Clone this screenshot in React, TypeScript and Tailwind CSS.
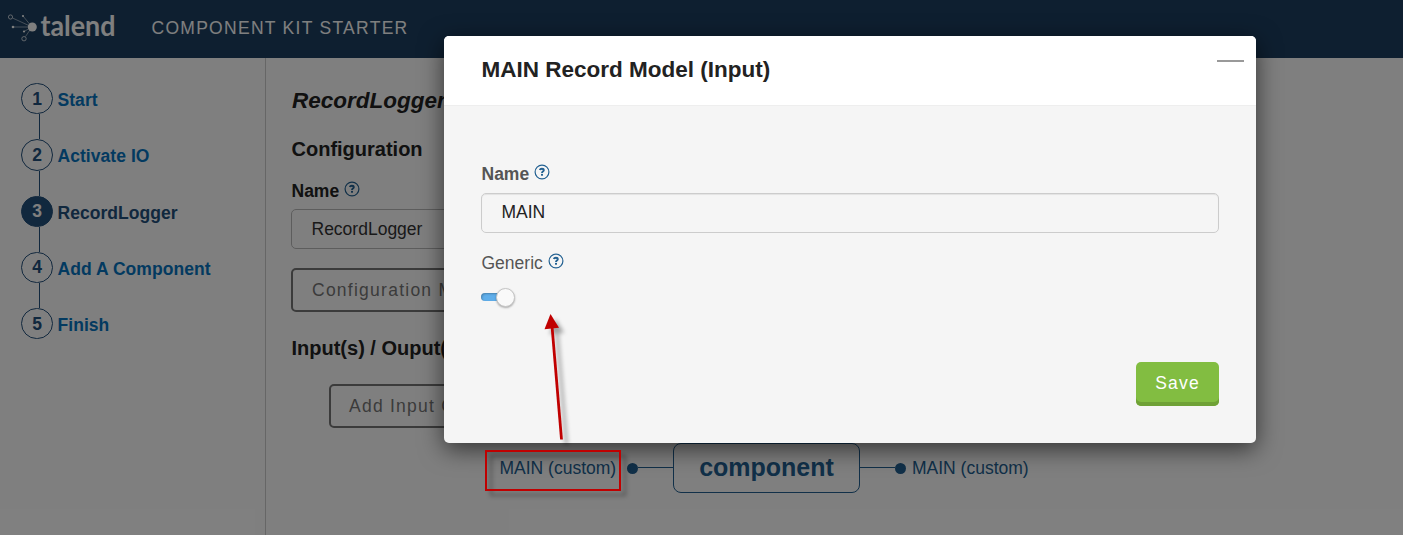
import React from "react";

const steps = ["Start", "Activate IO", "RecordLogger", "Add A Component", "Finish"];
const ACTIVE = 2;

function Help() {
  return (
    <svg className="h-4 w-4 shrink-0" viewBox="0 0 16 16" fill="none">
      <circle cx="8" cy="8" r="6.900" stroke="#236192" strokeWidth="1.200" />
      <path
        d="M5.800 6C6.100 5 6.900 4.700 7.900 4.700c1.200 0 1.900.6 1.900 1.500 0 1.300-1.800 1.300-1.800 2.700"
        stroke="#236192"
        strokeWidth="1.900"
      />
      <rect x="7" y="9.900" width="2" height="1.800" fill="#236192" />
    </svg>
  );
}

function Logo() {
  return (
    <svg className="h-[58px] w-[120px] shrink-0 overflow-visible" viewBox="0 0 120 58">
      <g stroke="#fff" strokeWidth="0.500" fill="none">
        <path d="M12.500 18 32 27M23 16l9 11M13 27h19M24 31.500l8-4.500M25.500 36.500 32 27" />
        <circle cx="10.500" cy="17" r="2.100" strokeWidth="0.700" />
        <circle cx="24" cy="38.700" r="2.200" strokeWidth="0.700" />
      </g>
      <g fill="#fff">
        <circle cx="32.300" cy="27" r="4.500" />
        <circle cx="23" cy="16" r="1.100" />
        <circle cx="13" cy="27" r="1.300" />
        <circle cx="24" cy="31.500" r="1.100" />
        <text
          x="40.500"
          y="36.300"
          fontFamily="Lato, sans-serif"
          fontWeight="700"
          fontSize="28"
          textLength="75"
          lengthAdjust="spacingAndGlyphs"
        >
          talend
        </text>
      </g>
    </svg>
  );
}

function Sidebar() {
  return (
    <nav className="w-[266px] shrink-0 border-r border-[#ccc] pt-[25px] pl-[21px]">
      {steps.map((s, i) => (
        <div key={s} className="flex h-[56.25px] gap-[4.500px]">
          <div className="flex w-8 flex-col items-center">
            <div
              className={
                "flex h-[31.25px] w-8 shrink-0 items-center justify-center rounded-full border border-[#23507c] font-bold " +
                (i === ACTIVE ? "bg-[#23507c] text-white" : "text-[#23507c]")
              }
            >
              {i + 1}
            </div>
            {i < steps.length - 1 && <div className="ml-[5px] w-px grow bg-[#23507c]" />}
          </div>
          <div
            className={
              "pt-[3px] leading-[28px] font-bold tracking-[0.050px] " + (i === ACTIVE ? "text-[#23507c]" : "text-[#0675c1]")
            }
          >
            {s}
          </div>
        </div>
      ))}
    </nav>
  );
}

function Content() {
  return (
    <main className="flex grow flex-col items-start pt-[27px] pl-[25px] text-[#222]">
      <h1 className="h-[50px] pl-[1px] text-[22.500px] leading-[31px] font-bold italic">RecordLogger</h1>
      <h2 className="h-[41px] pl-[0.500px] text-[20px] leading-[28px] font-bold">Configuration</h2>
      <div className="flex h-[33px] items-start gap-[5px] pl-[0.500px] leading-[30px] font-bold">
        Name
        <div className="pt-[5px]"><Help /></div>
      </div>
      <div className="flex h-10 w-[800px] items-center rounded-[5px] border border-[#bbb] px-[19.500px] text-[#333]">
        RecordLogger
      </div>
      <button className="mt-[19px] h-11 rounded-[5px] border-2 border-[#777] px-[19px] tracking-[1.250px] text-[#777]">
        Configuration Model
      </button>
      <h2 className="mt-[22px] h-[50px] pl-[0.500px] text-[20px] leading-[28px] font-bold">Input(s) / Ouput(s)</h2>
      <button className="ml-[38px] h-11 rounded-[5px] border-2 border-[#777] px-[18px] tracking-[1.250px] text-[#777]">
        Add Input Connection
      </button>
      <div className="mt-[15px] ml-[208.500px] flex h-[50px] items-center whitespace-nowrap text-[#236192]">
        <span className="w-[117.500px]">MAIN (custom)</span>
        <i className="mt-px ml-[10px] h-[11px] w-[11px] rounded-full bg-[#236192]" />
        <i className="mb-px h-px w-[35px] bg-[#236192]" />
        <div className="flex h-[50px] w-[187px] items-center justify-center rounded-[8px] border border-[#236192] text-[25px] font-bold">
          component
        </div>
        <i className="mb-px h-px w-[35px] bg-[#236192]" />
        <i className="mt-px mr-[6px] h-[11px] w-[11px] rounded-full bg-[#236192]" />
        <span>MAIN (custom)</span>
      </div>
    </main>
  );
}

function Dialog() {
  return (
    <section className="absolute top-[36px] left-[444px] flex h-[407px] w-[812px] flex-col overflow-hidden rounded-[5px] bg-[#f5f5f5] text-[#555] shadow-[0_6px_25px_rgba(0,0,0,0.600)]">
      <header className="flex h-[70px] shrink-0 justify-between border-b border-[#eee] bg-white pr-[12px] pl-[37.500px]">
        <h2 className="text-[22.500px] leading-[67px] font-bold text-[#222]">MAIN Record Model (Input)</h2>
        <button aria-label="Close" className="mt-[24px] h-[2px] w-[27px] bg-[#999]" />
      </header>
      <div className="flex grow flex-col px-[37px] pt-[54px]">
        <div className="flex h-[33px] items-start gap-[5px] pl-[0.500px] leading-[28px] font-bold">
          Name
          <div className="pt-[4px]"><Help /></div>
        </div>
        <div className="flex h-10 items-center rounded-[5px] border border-[#ccc] px-[19.500px] pb-[2px] text-[#222] shadow-[inset_0_1px_1px_rgba(0,0,0,0.075)]">
          MAIN
        </div>
        <div className="mt-[16px] flex h-[38px] items-start gap-[5px] pl-[0.500px] leading-[28px]">
          Generic
          <div className="pt-[4px]"><Help /></div>
        </div>
        <div className="flex h-5 items-center">
          <div className="h-2 w-5 rounded-l-full bg-[#5faeea] shadow-[inset_1px_1px_2px_rgba(0,0,0,0.250)]" />
          <div className="-ml-[5px] h-[19px] w-[19px] rounded-full border border-[#c5c5c5] bg-[#f9f9f9] shadow-[0_1px_2px_rgba(0,0,0,0.300)]" />
        </div>
        <button className="mt-[55px] h-11 w-[83px] self-end rounded-[5px] bg-[#82bd41] pb-[2px] tracking-[1.200px] text-white shadow-[inset_0_-4px_0_#6fa136]">
          Save
        </button>
      </div>
    </section>
  );
}

function Annotation() {
  return (
    <svg className="absolute top-[300px] left-[470px] h-[210px] w-[170px]" viewBox="470 300 170 210">
      <g className="[filter:drop-shadow(5px_5px_2px_rgba(0,0,0,0.350))]">
        <rect x="486" y="451" width="134" height="39" fill="none" stroke="#c00000" strokeWidth="2" />
        <path d="M561.500 439.500 552 326" stroke="#c00000" strokeWidth="2.800" />
        <path d="M550.500 314 544.500 329.300 559 327.700Z" fill="#c00000" />
      </g>
    </svg>
  );
}

export default function App() {
  return (
    <div className="relative flex h-[535px] w-[1403px] flex-col overflow-hidden bg-white font-['Liberation_Sans',Arial,sans-serif] text-[17.500px]">
      <header className="flex h-[58px] shrink-0 items-center bg-[#1c3f61] text-white">
        <Logo />
        <span className="ml-[31.500px] pb-[2px] tracking-[1.280px]">COMPONENT KIT STARTER</span>
      </header>
      <div className="flex grow">
        <Sidebar />
        <Content />
      </div>
      <div className="absolute inset-0 bg-black/50" />
      <Dialog />
      <Annotation />
    </div>
  );
}
